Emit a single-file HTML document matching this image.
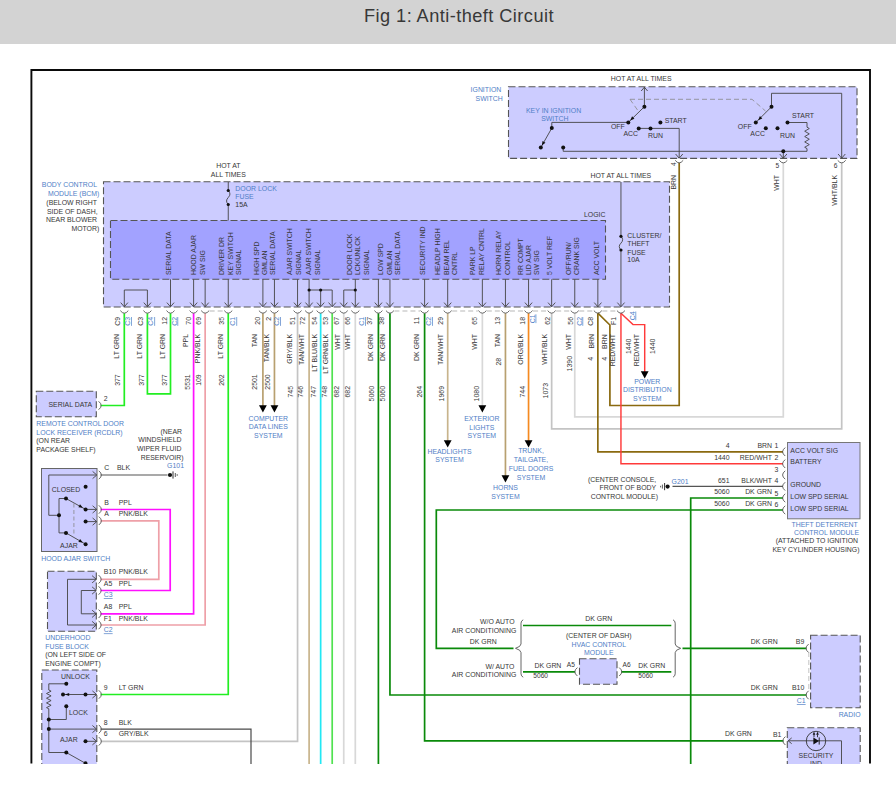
<!DOCTYPE html>
<html lang="en">
<head>
<meta charset="utf-8">
<title>Fig 1: Anti-theft Circuit</title>
<style>
html,body{margin:0;padding:0;background:#fff;}
body{width:896px;height:793px;overflow:hidden;position:relative;font-family:"Liberation Sans",sans-serif;}
#hdr{position:absolute;left:0;top:0;width:896px;height:43.5px;background:#d3d3d3;}
#ttl{position:absolute;left:364px;top:3.5px;margin:0;font-weight:normal;font-size:18.2px;line-height:24px;color:#383838;white-space:nowrap;letter-spacing:0.44px;}
#dia{position:absolute;left:0;top:0;width:896px;height:763.5px;overflow:hidden;}
svg text{font-family:"Liberation Sans",sans-serif;}
</style>
</head>
<body>
<div id="hdr"><h1 id="ttl">Fig 1: Anti-theft Circuit</h1></div>
<div id="dia">
<svg width="896" height="793" viewBox="0 0 896 793">
<rect x="508.5" y="86.8" width="348.50" height="71.60" fill="#ccccff" stroke="#555" stroke-width="1.1" stroke-dasharray="7 3"/>
<rect x="103.5" y="181.8" width="566.00" height="125.20" fill="#ccccff" stroke="#555" stroke-width="1.1" stroke-dasharray="7 3"/>
<rect x="110.5" y="220.5" width="495.00" height="58.80" fill="#a2a2ff" stroke="#555" stroke-width="1.1" stroke-dasharray="7 3"/>
<rect x="36.3" y="391.3" width="60.00" height="25.50" fill="#ccccff" stroke="#555" stroke-width="1.1" stroke-dasharray="7 3"/>
<rect x="41.5" y="468.5" width="55.50" height="83.00" fill="#ccccff" stroke="#666" stroke-width="1"/>
<rect x="47.5" y="571.3" width="48.80" height="60.00" fill="#ccccff" stroke="#555" stroke-width="1.1" stroke-dasharray="7 3"/>
<rect x="41.8" y="670" width="55.00" height="105.00" fill="#ccccff" stroke="#555" stroke-width="1.1" stroke-dasharray="7 3"/>
<rect x="787.5" y="442.5" width="72.50" height="76.30" fill="#ccccff" stroke="#777" stroke-width="1"/>
<rect x="579.5" y="658.8" width="37.50" height="25.50" fill="#ccccff" stroke="#555" stroke-width="1.1" stroke-dasharray="7 3"/>
<rect x="810.6" y="635.2" width="49.60" height="72.60" fill="#ccccff" stroke="#555" stroke-width="1.1" stroke-dasharray="7 3"/>
<rect x="787.3" y="727.8" width="72.90" height="47.20" fill="#ccccff" stroke="#555" stroke-width="1.1" stroke-dasharray="7 3"/>
<polyline points="124.30,313.20 124.30,405.50 100.50,405.50" fill="none" stroke="#22ee22" stroke-width="1.7" stroke-linejoin="miter" stroke-linecap="butt"/>
<polyline points="147.40,313.20 147.40,393.80 170.50,393.80 170.50,313.20" fill="none" stroke="#22ee22" stroke-width="1.7" stroke-linejoin="miter" stroke-linecap="butt"/>
<polyline points="193.60,313.20 193.60,613.80 100.50,613.80" fill="none" stroke="#ff10ff" stroke-width="1.7" stroke-linejoin="miter" stroke-linecap="butt"/>
<polyline points="205.15,313.20 205.15,625.00 100.50,625.00" fill="none" stroke="#eea0a8" stroke-width="1.7" stroke-linejoin="miter" stroke-linecap="butt"/>
<polyline points="228.25,313.20 228.25,694.50 100.50,694.50" fill="none" stroke="#22ee22" stroke-width="1.7" stroke-linejoin="miter" stroke-linecap="butt"/>
<polyline points="262.90,313.20 262.90,406.00" fill="none" stroke="#b8a070" stroke-width="1.7" stroke-linejoin="miter" stroke-linecap="butt"/>
<polyline points="274.45,313.20 274.45,406.00" fill="none" stroke="#b8a070" stroke-width="1.7" stroke-linejoin="miter" stroke-linecap="butt"/>
<polygon points="259.00,405.30 266.80,405.30 262.90,412.60" fill="#000"/>
<polygon points="270.55,405.30 278.35,405.30 274.45,412.60" fill="#000"/>
<polyline points="297.55,313.20 297.55,741.30 100.50,741.30" fill="none" stroke="#c4c4c4" stroke-width="1.7" stroke-linejoin="miter" stroke-linecap="butt"/>
<polyline points="309.10,313.20 309.10,770.00" fill="none" stroke="#c8b48c" stroke-width="1.7" stroke-linejoin="miter" stroke-linecap="butt"/>
<polyline points="320.65,313.20 320.65,770.00" fill="none" stroke="#22e8f4" stroke-width="1.7" stroke-linejoin="miter" stroke-linecap="butt"/>
<polyline points="332.20,313.20 332.20,770.00" fill="none" stroke="#50e250" stroke-width="1.7" stroke-linejoin="miter" stroke-linecap="butt"/>
<polyline points="343.75,313.20 343.75,770.00" fill="none" stroke="#d8d8d8" stroke-width="1.7" stroke-linejoin="miter" stroke-linecap="butt"/>
<polyline points="355.30,313.20 355.30,770.00" fill="none" stroke="#d8d8d8" stroke-width="1.7" stroke-linejoin="miter" stroke-linecap="butt"/>
<polyline points="378.40,313.20 378.40,770.00" fill="none" stroke="#0a8a0a" stroke-width="1.7" stroke-linejoin="miter" stroke-linecap="butt"/>
<polyline points="389.95,313.20 389.95,695.00 806.50,695.00" fill="none" stroke="#0a8a0a" stroke-width="1.7" stroke-linejoin="miter" stroke-linecap="butt"/>
<polyline points="424.60,313.20 424.60,740.80 783.50,740.80" fill="none" stroke="#0a8a0a" stroke-width="1.7" stroke-linejoin="miter" stroke-linecap="butt"/>
<polyline points="447.70,313.20 447.70,441.00" fill="none" stroke="#c8b48c" stroke-width="1.7" stroke-linejoin="miter" stroke-linecap="butt"/>
<polygon points="443.80,440.30 451.60,440.30 447.70,447.60" fill="#000"/>
<polyline points="482.35,313.20 482.35,406.00" fill="none" stroke="#d8d8d8" stroke-width="1.7" stroke-linejoin="miter" stroke-linecap="butt"/>
<polygon points="478.45,405.30 486.25,405.30 482.35,412.60" fill="#000"/>
<polyline points="505.45,313.20 505.45,476.00" fill="none" stroke="#b8a070" stroke-width="1.7" stroke-linejoin="miter" stroke-linecap="butt"/>
<polygon points="501.55,475.30 509.35,475.30 505.45,482.60" fill="#000"/>
<polyline points="528.55,313.20 528.55,441.00" fill="none" stroke="#f58a20" stroke-width="1.7" stroke-linejoin="miter" stroke-linecap="butt"/>
<polygon points="524.65,440.30 532.45,440.30 528.55,447.60" fill="#000"/>
<polyline points="551.65,313.20 551.65,428.80 841.70,428.80 841.70,162.80" fill="none" stroke="#c4c4c4" stroke-width="1.7" stroke-linejoin="miter" stroke-linecap="butt"/>
<polyline points="574.75,313.20 574.75,416.80 783.30,416.80 783.30,162.80" fill="none" stroke="#d8d8d8" stroke-width="1.7" stroke-linejoin="miter" stroke-linecap="butt"/>
<polyline points="597.85,313.20 597.85,451.80 783.00,451.80" fill="none" stroke="#8a6a10" stroke-width="1.7" stroke-linejoin="miter" stroke-linecap="butt"/>
<polyline points="597.85,313.20 609.90,325.00 609.90,405.50 679.20,405.50 679.20,162.80" fill="none" stroke="#8a6a10" stroke-width="1.7" stroke-linejoin="miter" stroke-linecap="butt"/>
<polyline points="620.95,313.20 620.95,463.80 783.00,463.80" fill="none" stroke="#ff3a3a" stroke-width="1.4449999999999998" stroke-linejoin="miter" stroke-linecap="butt"/>
<polyline points="620.95,313.20 633.00,324.60 644.70,324.60 644.70,372.00" fill="none" stroke="#ff3a3a" stroke-width="1.4449999999999998" stroke-linejoin="miter" stroke-linecap="butt"/>
<polygon points="640.80,371.30 648.60,371.30 644.70,378.60" fill="#000"/>
<polyline points="672.50,486.40 783.00,486.40" fill="none" stroke="#555555" stroke-width="1.1" stroke-linejoin="miter" stroke-linecap="butt"/>
<polyline points="783.00,510.00 436.30,510.00 436.30,648.30 513.50,648.30" fill="none" stroke="#0a8a0a" stroke-width="1.7" stroke-linejoin="miter" stroke-linecap="butt"/>
<polyline points="783.00,498.00 690.70,498.00 690.70,770.00" fill="none" stroke="#0a8a0a" stroke-width="1.7" stroke-linejoin="miter" stroke-linecap="butt"/>
<polyline points="523.00,625.50 671.30,625.50" fill="none" stroke="#0a8a0a" stroke-width="1.7" stroke-linejoin="miter" stroke-linecap="butt"/>
<polyline points="523.00,671.80 575.20,671.80" fill="none" stroke="#0a8a0a" stroke-width="1.7" stroke-linejoin="miter" stroke-linecap="butt"/>
<polyline points="621.30,671.80 671.30,671.80" fill="none" stroke="#0a8a0a" stroke-width="1.7" stroke-linejoin="miter" stroke-linecap="butt"/>
<polyline points="682.50,648.30 806.50,648.30" fill="none" stroke="#0a8a0a" stroke-width="1.7" stroke-linejoin="miter" stroke-linecap="butt"/>
<polyline points="100.50,475.00 167.50,475.00" fill="none" stroke="#555" stroke-width="1.2" stroke-linejoin="miter" stroke-linecap="butt"/>
<polyline points="100.50,509.50 170.20,509.50 170.20,590.50 100.50,590.50" fill="none" stroke="#ff10ff" stroke-width="1.7" stroke-linejoin="miter" stroke-linecap="butt"/>
<polyline points="100.50,520.80 158.80,520.80 158.80,579.30 100.50,579.30" fill="none" stroke="#eea0a8" stroke-width="1.7" stroke-linejoin="miter" stroke-linecap="butt"/>
<polyline points="100.50,729.10 251.00,729.10 251.00,770.00" fill="none" stroke="#4a4a4a" stroke-width="1.2" stroke-linejoin="miter" stroke-linecap="butt"/>
<polyline points="644.40,106.70 644.40,87.20" fill="none" stroke="#444" stroke-width="0.9" stroke-linejoin="miter" stroke-linecap="butt"/>
<polyline points="641.20,91.00 644.40,87.20 647.60,91.00" fill="none" stroke="#444" stroke-width="0.9" stroke-linejoin="miter" stroke-linecap="butt"/>
<polyline points="630.00,99.30 752.00,99.30 765.50,111.00" fill="none" stroke="#888" stroke-width="0.8" stroke-linejoin="miter" stroke-linecap="butt" stroke-dasharray="5 3"/>
<polyline points="630.00,99.30 638.20,111.00" fill="none" stroke="#888" stroke-width="0.8" stroke-linejoin="miter" stroke-linecap="butt" stroke-dasharray="5 3"/>
<polyline points="644.40,106.70 628.30,122.40" fill="none" stroke="#444" stroke-width="0.9" stroke-linejoin="miter" stroke-linecap="butt"/>
<polygon points="630.23,120.52 632.05,116.37 634.43,118.80" fill="#111"/>
<polyline points="628.30,122.40 551.80,122.40 551.80,128.10" fill="none" stroke="#444" stroke-width="0.9" stroke-linejoin="miter" stroke-linecap="butt"/>
<polyline points="551.80,128.10 540.80,147.50" fill="none" stroke="#444" stroke-width="0.9" stroke-linejoin="miter" stroke-linecap="butt"/>
<polygon points="541.90,145.56 542.49,141.07 545.45,142.74" fill="#111"/>
<polyline points="563.20,147.50 563.20,151.30 807.00,151.30 807.00,148.60" fill="none" stroke="#444" stroke-width="0.9" stroke-linejoin="miter" stroke-linecap="butt"/>
<polyline points="638.70,128.40 679.20,128.40 679.20,158.00" fill="none" stroke="#444" stroke-width="0.9" stroke-linejoin="miter" stroke-linecap="butt"/>
<polyline points="675.60,154.00 679.20,158.20 682.80,154.00" fill="none" stroke="#444" stroke-width="0.9" stroke-linejoin="miter" stroke-linecap="butt"/>
<circle cx="644.40" cy="106.70" r="2.0" fill="#111"/>
<circle cx="628.30" cy="122.40" r="2.0" fill="#111"/>
<circle cx="551.80" cy="128.10" r="2.0" fill="#111"/>
<circle cx="540.80" cy="147.50" r="2.0" fill="#111"/>
<circle cx="563.20" cy="147.50" r="2.0" fill="#111"/>
<circle cx="638.70" cy="128.40" r="2.0" fill="#111"/>
<circle cx="650.50" cy="128.40" r="2.0" fill="#111"/>
<circle cx="660.40" cy="122.40" r="2.0" fill="#111"/>
<polyline points="771.50,106.80 771.50,93.30 841.70,93.30 841.70,158.00" fill="none" stroke="#444" stroke-width="0.9" stroke-linejoin="miter" stroke-linecap="butt"/>
<polyline points="838.10,154.00 841.70,158.20 845.30,154.00" fill="none" stroke="#444" stroke-width="0.9" stroke-linejoin="miter" stroke-linecap="butt"/>
<polyline points="771.50,106.80 755.80,122.50" fill="none" stroke="#444" stroke-width="0.9" stroke-linejoin="miter" stroke-linecap="butt"/>
<polygon points="758.15,120.14 759.92,115.97 762.33,118.38" fill="#111"/>
<polyline points="787.50,122.50 807.00,122.50 807.00,127.20" fill="none" stroke="#444" stroke-width="0.9" stroke-linejoin="miter" stroke-linecap="butt"/>
<polyline points="807.00,127.20 809.30,128.54 804.70,131.21 809.30,133.89 804.70,136.56 809.30,139.24 804.70,141.91 809.30,144.59 804.70,147.26 807.00,148.60" fill="none" stroke="#444" stroke-width="0.9" stroke-linejoin="miter" stroke-linecap="butt"/>
<polyline points="783.30,151.30 783.30,158.00" fill="none" stroke="#444" stroke-width="0.9" stroke-linejoin="miter" stroke-linecap="butt"/>
<polyline points="779.70,154.00 783.30,158.20 786.90,154.00" fill="none" stroke="#444" stroke-width="0.9" stroke-linejoin="miter" stroke-linecap="butt"/>
<circle cx="771.50" cy="106.80" r="2.0" fill="#111"/>
<circle cx="755.80" cy="122.50" r="2.0" fill="#111"/>
<circle cx="765.80" cy="128.30" r="2.0" fill="#111"/>
<circle cx="777.50" cy="128.30" r="2.0" fill="#111"/>
<circle cx="787.50" cy="122.50" r="2.0" fill="#111"/>
<circle cx="783.30" cy="151.30" r="2.0" fill="#111"/>
<path d="M675.20,160.30 Q679.20,165.50 683.20,160.30" fill="none" stroke="#555" stroke-width="0.9"/>
<path d="M779.30,160.30 Q783.30,165.50 787.30,160.30" fill="none" stroke="#555" stroke-width="0.9"/>
<path d="M837.70,160.30 Q841.70,165.50 845.70,160.30" fill="none" stroke="#555" stroke-width="0.9"/>
<polyline points="228.25,182.00 228.25,190.50" fill="none" stroke="#444" stroke-width="0.9" stroke-linejoin="miter" stroke-linecap="butt"/>
<polyline points="228.25,204.50 228.25,220.50" fill="none" stroke="#444" stroke-width="0.9" stroke-linejoin="miter" stroke-linecap="butt"/>
<path d="M228.25,190.5 q3.4,3.5 0,7 q-3.4,3.5 0,7" fill="none" stroke="#444" stroke-width="0.9"/>
<circle cx="228.25" cy="190.50" r="1.6" fill="#111"/>
<circle cx="228.25" cy="204.50" r="1.6" fill="#111"/>
<polyline points="620.95,182.00 620.95,236.30" fill="none" stroke="#444" stroke-width="0.9" stroke-linejoin="miter" stroke-linecap="butt"/>
<polyline points="620.95,250.00 620.95,306.50" fill="none" stroke="#444" stroke-width="0.9" stroke-linejoin="miter" stroke-linecap="butt"/>
<path d="M620.95,236.3 q3.4,3.4 0,6.85 q-3.4,3.4 0,6.85" fill="none" stroke="#444" stroke-width="0.9"/>
<circle cx="620.95" cy="236.30" r="1.6" fill="#111"/>
<circle cx="620.95" cy="250.00" r="1.6" fill="#111"/>
<polyline points="617.35,302.60 620.95,306.80 624.55,302.60" fill="none" stroke="#444" stroke-width="0.9" stroke-linejoin="miter" stroke-linecap="butt"/>
<path d="M120.30,310.60 Q124.30,315.80 128.30,310.60" fill="none" stroke="#555" stroke-width="0.9"/>
<path d="M143.40,310.60 Q147.40,315.80 151.40,310.60" fill="none" stroke="#555" stroke-width="0.9"/>
<path d="M166.50,310.60 Q170.50,315.80 174.50,310.60" fill="none" stroke="#555" stroke-width="0.9"/>
<path d="M189.60,310.60 Q193.60,315.80 197.60,310.60" fill="none" stroke="#555" stroke-width="0.9"/>
<path d="M201.15,310.60 Q205.15,315.80 209.15,310.60" fill="none" stroke="#555" stroke-width="0.9"/>
<path d="M224.25,310.60 Q228.25,315.80 232.25,310.60" fill="none" stroke="#555" stroke-width="0.9"/>
<path d="M258.90,310.60 Q262.90,315.80 266.90,310.60" fill="none" stroke="#555" stroke-width="0.9"/>
<path d="M270.45,310.60 Q274.45,315.80 278.45,310.60" fill="none" stroke="#555" stroke-width="0.9"/>
<path d="M293.55,310.60 Q297.55,315.80 301.55,310.60" fill="none" stroke="#555" stroke-width="0.9"/>
<path d="M305.10,310.60 Q309.10,315.80 313.10,310.60" fill="none" stroke="#555" stroke-width="0.9"/>
<path d="M316.65,310.60 Q320.65,315.80 324.65,310.60" fill="none" stroke="#555" stroke-width="0.9"/>
<path d="M328.20,310.60 Q332.20,315.80 336.20,310.60" fill="none" stroke="#555" stroke-width="0.9"/>
<path d="M339.75,310.60 Q343.75,315.80 347.75,310.60" fill="none" stroke="#555" stroke-width="0.9"/>
<path d="M351.30,310.60 Q355.30,315.80 359.30,310.60" fill="none" stroke="#555" stroke-width="0.9"/>
<path d="M374.40,310.60 Q378.40,315.80 382.40,310.60" fill="none" stroke="#555" stroke-width="0.9"/>
<path d="M385.95,310.60 Q389.95,315.80 393.95,310.60" fill="none" stroke="#555" stroke-width="0.9"/>
<path d="M420.60,310.60 Q424.60,315.80 428.60,310.60" fill="none" stroke="#555" stroke-width="0.9"/>
<path d="M443.70,310.60 Q447.70,315.80 451.70,310.60" fill="none" stroke="#555" stroke-width="0.9"/>
<path d="M478.35,310.60 Q482.35,315.80 486.35,310.60" fill="none" stroke="#555" stroke-width="0.9"/>
<path d="M501.45,310.60 Q505.45,315.80 509.45,310.60" fill="none" stroke="#555" stroke-width="0.9"/>
<path d="M524.55,310.60 Q528.55,315.80 532.55,310.60" fill="none" stroke="#555" stroke-width="0.9"/>
<path d="M547.65,310.60 Q551.65,315.80 555.65,310.60" fill="none" stroke="#555" stroke-width="0.9"/>
<path d="M570.75,310.60 Q574.75,315.80 578.75,310.60" fill="none" stroke="#555" stroke-width="0.9"/>
<path d="M593.85,310.60 Q597.85,315.80 601.85,310.60" fill="none" stroke="#555" stroke-width="0.9"/>
<path d="M616.95,310.60 Q620.95,315.80 624.95,310.60" fill="none" stroke="#555" stroke-width="0.9"/>
<polyline points="170.50,279.30 170.50,306.50" fill="none" stroke="#444" stroke-width="0.9" stroke-linejoin="miter" stroke-linecap="butt"/>
<polyline points="166.90,302.60 170.50,306.80 174.10,302.60" fill="none" stroke="#444" stroke-width="0.9" stroke-linejoin="miter" stroke-linecap="butt"/>
<polyline points="193.60,279.30 193.60,306.50" fill="none" stroke="#444" stroke-width="0.9" stroke-linejoin="miter" stroke-linecap="butt"/>
<polyline points="190.00,302.60 193.60,306.80 197.20,302.60" fill="none" stroke="#444" stroke-width="0.9" stroke-linejoin="miter" stroke-linecap="butt"/>
<polyline points="205.15,279.30 205.15,306.50" fill="none" stroke="#444" stroke-width="0.9" stroke-linejoin="miter" stroke-linecap="butt"/>
<polyline points="201.55,302.60 205.15,306.80 208.75,302.60" fill="none" stroke="#444" stroke-width="0.9" stroke-linejoin="miter" stroke-linecap="butt"/>
<polyline points="228.25,279.30 228.25,306.50" fill="none" stroke="#444" stroke-width="0.9" stroke-linejoin="miter" stroke-linecap="butt"/>
<polyline points="224.65,302.60 228.25,306.80 231.85,302.60" fill="none" stroke="#444" stroke-width="0.9" stroke-linejoin="miter" stroke-linecap="butt"/>
<polyline points="262.90,279.30 262.90,306.50" fill="none" stroke="#444" stroke-width="0.9" stroke-linejoin="miter" stroke-linecap="butt"/>
<polyline points="259.30,302.60 262.90,306.80 266.50,302.60" fill="none" stroke="#444" stroke-width="0.9" stroke-linejoin="miter" stroke-linecap="butt"/>
<polyline points="274.45,279.30 274.45,306.50" fill="none" stroke="#444" stroke-width="0.9" stroke-linejoin="miter" stroke-linecap="butt"/>
<polyline points="270.85,302.60 274.45,306.80 278.05,302.60" fill="none" stroke="#444" stroke-width="0.9" stroke-linejoin="miter" stroke-linecap="butt"/>
<polyline points="297.55,279.30 297.55,306.50" fill="none" stroke="#444" stroke-width="0.9" stroke-linejoin="miter" stroke-linecap="butt"/>
<polyline points="293.95,302.60 297.55,306.80 301.15,302.60" fill="none" stroke="#444" stroke-width="0.9" stroke-linejoin="miter" stroke-linecap="butt"/>
<polyline points="309.10,279.30 309.10,306.50" fill="none" stroke="#444" stroke-width="0.9" stroke-linejoin="miter" stroke-linecap="butt"/>
<polyline points="305.50,302.60 309.10,306.80 312.70,302.60" fill="none" stroke="#444" stroke-width="0.9" stroke-linejoin="miter" stroke-linecap="butt"/>
<polyline points="355.30,279.30 355.30,306.50" fill="none" stroke="#444" stroke-width="0.9" stroke-linejoin="miter" stroke-linecap="butt"/>
<polyline points="351.70,302.60 355.30,306.80 358.90,302.60" fill="none" stroke="#444" stroke-width="0.9" stroke-linejoin="miter" stroke-linecap="butt"/>
<polyline points="378.40,279.30 378.40,306.50" fill="none" stroke="#444" stroke-width="0.9" stroke-linejoin="miter" stroke-linecap="butt"/>
<polyline points="374.80,302.60 378.40,306.80 382.00,302.60" fill="none" stroke="#444" stroke-width="0.9" stroke-linejoin="miter" stroke-linecap="butt"/>
<polyline points="389.95,279.30 389.95,306.50" fill="none" stroke="#444" stroke-width="0.9" stroke-linejoin="miter" stroke-linecap="butt"/>
<polyline points="386.35,302.60 389.95,306.80 393.55,302.60" fill="none" stroke="#444" stroke-width="0.9" stroke-linejoin="miter" stroke-linecap="butt"/>
<polyline points="424.60,279.30 424.60,306.50" fill="none" stroke="#444" stroke-width="0.9" stroke-linejoin="miter" stroke-linecap="butt"/>
<polyline points="421.00,302.60 424.60,306.80 428.20,302.60" fill="none" stroke="#444" stroke-width="0.9" stroke-linejoin="miter" stroke-linecap="butt"/>
<polyline points="447.70,279.30 447.70,306.50" fill="none" stroke="#444" stroke-width="0.9" stroke-linejoin="miter" stroke-linecap="butt"/>
<polyline points="444.10,302.60 447.70,306.80 451.30,302.60" fill="none" stroke="#444" stroke-width="0.9" stroke-linejoin="miter" stroke-linecap="butt"/>
<polyline points="482.35,279.30 482.35,306.50" fill="none" stroke="#444" stroke-width="0.9" stroke-linejoin="miter" stroke-linecap="butt"/>
<polyline points="478.75,302.60 482.35,306.80 485.95,302.60" fill="none" stroke="#444" stroke-width="0.9" stroke-linejoin="miter" stroke-linecap="butt"/>
<polyline points="505.45,279.30 505.45,306.50" fill="none" stroke="#444" stroke-width="0.9" stroke-linejoin="miter" stroke-linecap="butt"/>
<polyline points="501.85,302.60 505.45,306.80 509.05,302.60" fill="none" stroke="#444" stroke-width="0.9" stroke-linejoin="miter" stroke-linecap="butt"/>
<polyline points="528.55,279.30 528.55,306.50" fill="none" stroke="#444" stroke-width="0.9" stroke-linejoin="miter" stroke-linecap="butt"/>
<polyline points="524.95,302.60 528.55,306.80 532.15,302.60" fill="none" stroke="#444" stroke-width="0.9" stroke-linejoin="miter" stroke-linecap="butt"/>
<polyline points="551.65,279.30 551.65,306.50" fill="none" stroke="#444" stroke-width="0.9" stroke-linejoin="miter" stroke-linecap="butt"/>
<polyline points="548.05,302.60 551.65,306.80 555.25,302.60" fill="none" stroke="#444" stroke-width="0.9" stroke-linejoin="miter" stroke-linecap="butt"/>
<polyline points="574.75,279.30 574.75,306.50" fill="none" stroke="#444" stroke-width="0.9" stroke-linejoin="miter" stroke-linecap="butt"/>
<polyline points="571.15,302.60 574.75,306.80 578.35,302.60" fill="none" stroke="#444" stroke-width="0.9" stroke-linejoin="miter" stroke-linecap="butt"/>
<polyline points="597.85,279.30 597.85,306.50" fill="none" stroke="#444" stroke-width="0.9" stroke-linejoin="miter" stroke-linecap="butt"/>
<polyline points="594.25,302.60 597.85,306.80 601.45,302.60" fill="none" stroke="#444" stroke-width="0.9" stroke-linejoin="miter" stroke-linecap="butt"/>
<polyline points="124.30,306.50 124.30,290.00 147.40,290.00 147.40,306.50" fill="none" stroke="#444" stroke-width="0.9" stroke-linejoin="miter" stroke-linecap="butt"/>
<polyline points="120.70,302.60 124.30,306.80 127.90,302.60" fill="none" stroke="#444" stroke-width="0.9" stroke-linejoin="miter" stroke-linecap="butt"/>
<polyline points="143.80,302.60 147.40,306.80 151.00,302.60" fill="none" stroke="#444" stroke-width="0.9" stroke-linejoin="miter" stroke-linecap="butt"/>
<polyline points="309.10,290.00 332.20,290.00 332.20,306.50" fill="none" stroke="#444" stroke-width="0.9" stroke-linejoin="miter" stroke-linecap="butt"/>
<polyline points="320.65,290.00 320.65,306.50" fill="none" stroke="#444" stroke-width="0.9" stroke-linejoin="miter" stroke-linecap="butt"/>
<polyline points="317.05,302.60 320.65,306.80 324.25,302.60" fill="none" stroke="#444" stroke-width="0.9" stroke-linejoin="miter" stroke-linecap="butt"/>
<polyline points="328.60,302.60 332.20,306.80 335.80,302.60" fill="none" stroke="#444" stroke-width="0.9" stroke-linejoin="miter" stroke-linecap="butt"/>
<circle cx="309.10" cy="290.00" r="1.6" fill="#111"/>
<circle cx="320.65" cy="290.00" r="1.6" fill="#111"/>
<polyline points="355.30,290.00 343.75,290.00 343.75,306.50" fill="none" stroke="#444" stroke-width="0.9" stroke-linejoin="miter" stroke-linecap="butt"/>
<polyline points="340.15,302.60 343.75,306.80 347.35,302.60" fill="none" stroke="#444" stroke-width="0.9" stroke-linejoin="miter" stroke-linecap="butt"/>
<circle cx="355.30" cy="290.00" r="1.6" fill="#111"/>
<polyline points="209.65,311.00 223.75,311.00" fill="none" stroke="#999" stroke-width="0.7" stroke-linejoin="miter" stroke-linecap="butt" stroke-dasharray="5 3"/>
<polyline points="394.45,311.00 420.10,311.00" fill="none" stroke="#999" stroke-width="0.7" stroke-linejoin="miter" stroke-linecap="butt" stroke-dasharray="5 3"/>
<polyline points="452.20,311.00 477.85,311.00" fill="none" stroke="#999" stroke-width="0.7" stroke-linejoin="miter" stroke-linecap="butt" stroke-dasharray="5 3"/>
<polyline points="486.85,311.00 500.95,311.00" fill="none" stroke="#999" stroke-width="0.7" stroke-linejoin="miter" stroke-linecap="butt" stroke-dasharray="5 3"/>
<polyline points="509.95,311.00 524.05,311.00" fill="none" stroke="#999" stroke-width="0.7" stroke-linejoin="miter" stroke-linecap="butt" stroke-dasharray="5 3"/>
<polyline points="533.05,311.00 547.15,311.00" fill="none" stroke="#999" stroke-width="0.7" stroke-linejoin="miter" stroke-linecap="butt" stroke-dasharray="5 3"/>
<polyline points="556.15,311.00 570.25,311.00" fill="none" stroke="#999" stroke-width="0.7" stroke-linejoin="miter" stroke-linecap="butt" stroke-dasharray="5 3"/>
<polyline points="579.25,311.00 593.35,311.00" fill="none" stroke="#999" stroke-width="0.7" stroke-linejoin="miter" stroke-linecap="butt" stroke-dasharray="5 3"/>
<polyline points="602.35,311.00 616.45,311.00" fill="none" stroke="#999" stroke-width="0.7" stroke-linejoin="miter" stroke-linecap="butt" stroke-dasharray="5 3"/>
<text transform="translate(170.90 275.00) rotate(-90)" fill="#363636" font-size="6.92">SERIAL DATA</text>
<text transform="translate(195.80 275.00) rotate(-90)" fill="#363636" font-size="6.92">HOOD AJAR</text>
<text transform="translate(205.10 275.00) rotate(-90)" fill="#363636" font-size="6.92">SW SIG</text>
<text transform="translate(223.90 275.00) rotate(-90)" fill="#363636" font-size="6.92">DRIVER DR</text>
<text transform="translate(233.00 275.00) rotate(-90)" fill="#363636" font-size="6.92">KEY SWITCH</text>
<text transform="translate(240.80 275.00) rotate(-90)" fill="#363636" font-size="6.92">SIGNAL</text>
<text transform="translate(259.00 275.00) rotate(-90)" fill="#363636" font-size="6.92">HIGH SPD</text>
<text transform="translate(266.70 275.00) rotate(-90)" fill="#363636" font-size="6.92">GMLAN</text>
<text transform="translate(274.60 275.00) rotate(-90)" fill="#363636" font-size="6.92">SERIAL DATA</text>
<text transform="translate(292.00 275.00) rotate(-90)" fill="#363636" font-size="6.92">AJAR SWITCH</text>
<text transform="translate(301.00 275.00) rotate(-90)" fill="#363636" font-size="6.92">SIGNAL</text>
<text transform="translate(311.00 275.00) rotate(-90)" fill="#363636" font-size="6.92">AJAR SWITCH</text>
<text transform="translate(320.20 275.00) rotate(-90)" fill="#363636" font-size="6.92">SIGNAL</text>
<text transform="translate(351.50 275.00) rotate(-90)" fill="#363636" font-size="6.92">DOOR LOCK</text>
<text transform="translate(360.20 275.00) rotate(-90)" fill="#363636" font-size="6.92">LCK/UNLCK</text>
<text transform="translate(368.50 275.00) rotate(-90)" fill="#363636" font-size="6.92">SIGNAL</text>
<text transform="translate(383.20 275.00) rotate(-90)" fill="#363636" font-size="6.92">LOW SPD</text>
<text transform="translate(391.50 275.00) rotate(-90)" fill="#363636" font-size="6.92">GMLAN</text>
<text transform="translate(399.80 275.00) rotate(-90)" fill="#363636" font-size="6.92">SERIAL DATA</text>
<text transform="translate(425.20 275.00) rotate(-90)" fill="#363636" font-size="6.92">SECURITY IND</text>
<text transform="translate(440.20 275.00) rotate(-90)" fill="#363636" font-size="6.92">HEADLP HIGH</text>
<text transform="translate(448.50 275.00) rotate(-90)" fill="#363636" font-size="6.92">BEAM REL</text>
<text transform="translate(456.60 275.00) rotate(-90)" fill="#363636" font-size="6.92">CNTRL</text>
<text transform="translate(474.80 275.00) rotate(-90)" fill="#363636" font-size="6.92">PARK LP</text>
<text transform="translate(483.50 275.00) rotate(-90)" fill="#363636" font-size="6.92">RELAY CNTRL</text>
<text transform="translate(501.00 275.00) rotate(-90)" fill="#363636" font-size="6.92">HORN RELAY</text>
<text transform="translate(509.80 275.00) rotate(-90)" fill="#363636" font-size="6.92">CONTROL</text>
<text transform="translate(523.00 275.00) rotate(-90)" fill="#363636" font-size="6.92">RR COMPT</text>
<text transform="translate(531.20 275.00) rotate(-90)" fill="#363636" font-size="6.92">LID AJAR</text>
<text transform="translate(539.30 275.00) rotate(-90)" fill="#363636" font-size="6.92">SW SIG</text>
<text transform="translate(551.80 275.00) rotate(-90)" fill="#363636" font-size="6.92">5 VOLT REF</text>
<text transform="translate(570.50 275.00) rotate(-90)" fill="#363636" font-size="6.92">OFF/RUN/</text>
<text transform="translate(579.30 275.00) rotate(-90)" fill="#363636" font-size="6.92">CRANK SIG</text>
<text transform="translate(598.50 275.00) rotate(-90)" fill="#363636" font-size="6.92">ACC VOLT</text>
<text transform="translate(119.60 317.00) rotate(-90)" text-anchor="end" fill="#363636" font-size="6.92">C9</text>
<text transform="translate(119.20 334.00) rotate(-90)" text-anchor="end" fill="#363636" font-size="6.92">LT GRN</text>
<text transform="translate(120.00 374.30) rotate(-90)" text-anchor="end" fill="#363636" font-size="6.92">377</text>
<text transform="translate(143.40 317.00) rotate(-90)" text-anchor="end" fill="#363636" font-size="6.92">C3</text>
<text transform="translate(142.30 334.00) rotate(-90)" text-anchor="end" fill="#363636" font-size="6.92">LT GRN</text>
<text transform="translate(143.60 374.30) rotate(-90)" text-anchor="end" fill="#363636" font-size="6.92">377</text>
<text transform="translate(166.60 317.00) rotate(-90)" text-anchor="end" fill="#363636" font-size="6.92">12</text>
<text transform="translate(165.20 334.00) rotate(-90)" text-anchor="end" fill="#363636" font-size="6.92">LT GRN</text>
<text transform="translate(166.50 374.30) rotate(-90)" text-anchor="end" fill="#363636" font-size="6.92">377</text>
<text transform="translate(190.50 317.00) rotate(-90)" text-anchor="end" fill="#363636" font-size="6.92">70</text>
<text transform="translate(188.30 334.00) rotate(-90)" text-anchor="end" fill="#363636" font-size="6.92">PPL</text>
<text transform="translate(190.30 374.30) rotate(-90)" text-anchor="end" fill="#363636" font-size="6.92">5531</text>
<text transform="translate(201.15 317.00) rotate(-90)" text-anchor="end" fill="#363636" font-size="6.92">69</text>
<text transform="translate(199.95 334.00) rotate(-90)" text-anchor="end" fill="#363636" font-size="6.92">PNK/BLK</text>
<text transform="translate(201.25 374.30) rotate(-90)" text-anchor="end" fill="#363636" font-size="6.92">109</text>
<text transform="translate(224.25 317.00) rotate(-90)" text-anchor="end" fill="#363636" font-size="6.92">35</text>
<text transform="translate(223.25 334.00) rotate(-90)" text-anchor="end" fill="#363636" font-size="6.92">LT GRN</text>
<text transform="translate(224.25 374.30) rotate(-90)" text-anchor="end" fill="#363636" font-size="6.92">262</text>
<text transform="translate(259.60 317.00) rotate(-90)" text-anchor="end" fill="#363636" font-size="6.92">20</text>
<text transform="translate(256.90 334.00) rotate(-90)" text-anchor="end" fill="#363636" font-size="6.92">TAN</text>
<text transform="translate(257.10 374.30) rotate(-90)" text-anchor="end" fill="#363636" font-size="6.92">2501</text>
<text transform="translate(270.55 317.00) rotate(-90)" text-anchor="end" fill="#363636" font-size="6.92">2</text>
<text transform="translate(268.95 334.00) rotate(-90)" text-anchor="end" fill="#363636" font-size="6.92">TAN/BLK</text>
<text transform="translate(269.95 374.30) rotate(-90)" text-anchor="end" fill="#363636" font-size="6.92">2500</text>
<text transform="translate(294.75 317.00) rotate(-90)" text-anchor="end" fill="#363636" font-size="6.92">51</text>
<text transform="translate(291.95 334.00) rotate(-90)" text-anchor="end" fill="#363636" font-size="6.92">GRY/BLK</text>
<text transform="translate(293.25 386.00) rotate(-90)" text-anchor="end" fill="#363636" font-size="6.92">745</text>
<text transform="translate(305.30 317.00) rotate(-90)" text-anchor="end" fill="#363636" font-size="6.92">72</text>
<text transform="translate(303.60 334.00) rotate(-90)" text-anchor="end" fill="#363636" font-size="6.92">TAN/WHT</text>
<text transform="translate(302.50 386.00) rotate(-90)" text-anchor="end" fill="#363636" font-size="6.92">746</text>
<text transform="translate(317.35 317.00) rotate(-90)" text-anchor="end" fill="#363636" font-size="6.92">54</text>
<text transform="translate(317.35 334.00) rotate(-90)" text-anchor="end" fill="#363636" font-size="6.92">LT BLU/BLK</text>
<text transform="translate(315.75 386.00) rotate(-90)" text-anchor="end" fill="#363636" font-size="6.92">747</text>
<text transform="translate(328.40 317.00) rotate(-90)" text-anchor="end" fill="#363636" font-size="6.92">53</text>
<text transform="translate(327.70 334.00) rotate(-90)" text-anchor="end" fill="#363636" font-size="6.92">LT GRN/BLK</text>
<text transform="translate(327.30 386.00) rotate(-90)" text-anchor="end" fill="#363636" font-size="6.92">748</text>
<text transform="translate(339.45 317.00) rotate(-90)" text-anchor="end" fill="#363636" font-size="6.92">67</text>
<text transform="translate(339.75 334.00) rotate(-90)" text-anchor="end" fill="#363636" font-size="6.92">WHT</text>
<text transform="translate(338.85 386.00) rotate(-90)" text-anchor="end" fill="#363636" font-size="6.92">682</text>
<text transform="translate(349.60 317.00) rotate(-90)" text-anchor="end" fill="#363636" font-size="6.92">66</text>
<text transform="translate(349.50 334.00) rotate(-90)" text-anchor="end" fill="#363636" font-size="6.92">WHT</text>
<text transform="translate(350.40 386.00) rotate(-90)" text-anchor="end" fill="#363636" font-size="6.92">682</text>
<text transform="translate(372.20 317.00) rotate(-90)" text-anchor="end" fill="#363636" font-size="6.92">37</text>
<text transform="translate(373.10 334.00) rotate(-90)" text-anchor="end" fill="#363636" font-size="6.92">DK GRN</text>
<text transform="translate(373.90 386.00) rotate(-90)" text-anchor="end" fill="#363636" font-size="6.92">5060</text>
<text transform="translate(384.05 317.00) rotate(-90)" text-anchor="end" fill="#363636" font-size="6.92">38</text>
<text transform="translate(385.05 334.00) rotate(-90)" text-anchor="end" fill="#363636" font-size="6.92">DK GRN</text>
<text transform="translate(385.05 386.00) rotate(-90)" text-anchor="end" fill="#363636" font-size="6.92">5060</text>
<text transform="translate(419.00 317.00) rotate(-90)" text-anchor="end" fill="#363636" font-size="6.92">11</text>
<text transform="translate(419.30 334.00) rotate(-90)" text-anchor="end" fill="#363636" font-size="6.92">DK GRN</text>
<text transform="translate(421.80 386.00) rotate(-90)" text-anchor="end" fill="#363636" font-size="6.92">264</text>
<text transform="translate(443.40 317.00) rotate(-90)" text-anchor="end" fill="#363636" font-size="6.92">29</text>
<text transform="translate(443.40 334.00) rotate(-90)" text-anchor="end" fill="#363636" font-size="6.92">TAN/WHT</text>
<text transform="translate(444.40 386.00) rotate(-90)" text-anchor="end" fill="#363636" font-size="6.92">1969</text>
<text transform="translate(477.05 317.00) rotate(-90)" text-anchor="end" fill="#363636" font-size="6.92">65</text>
<text transform="translate(477.05 334.00) rotate(-90)" text-anchor="end" fill="#363636" font-size="6.92">WHT</text>
<text transform="translate(479.05 386.00) rotate(-90)" text-anchor="end" fill="#363636" font-size="6.92">1080</text>
<text transform="translate(499.85 317.00) rotate(-90)" text-anchor="end" fill="#363636" font-size="6.92">13</text>
<text transform="translate(499.85 334.00) rotate(-90)" text-anchor="end" fill="#363636" font-size="6.92">TAN</text>
<text transform="translate(501.15 357.80) rotate(-90)" text-anchor="end" fill="#363636" font-size="6.92">28</text>
<text transform="translate(524.85 317.00) rotate(-90)" text-anchor="end" fill="#363636" font-size="6.92">18</text>
<text transform="translate(523.25 334.00) rotate(-90)" text-anchor="end" fill="#363636" font-size="6.92">ORG/BLK</text>
<text transform="translate(524.85 386.00) rotate(-90)" text-anchor="end" fill="#363636" font-size="6.92">744</text>
<text transform="translate(549.65 317.00) rotate(-90)" text-anchor="end" fill="#363636" font-size="6.92">62</text>
<text transform="translate(547.45 334.00) rotate(-90)" text-anchor="end" fill="#363636" font-size="6.92">WHT/BLK</text>
<text transform="translate(548.35 383.00) rotate(-90)" text-anchor="end" fill="#363636" font-size="6.92">1073</text>
<text transform="translate(573.05 317.00) rotate(-90)" text-anchor="end" fill="#363636" font-size="6.92">56</text>
<text transform="translate(571.15 334.00) rotate(-90)" text-anchor="end" fill="#363636" font-size="6.92">WHT</text>
<text transform="translate(571.75 356.00) rotate(-90)" text-anchor="end" fill="#363636" font-size="6.92">1390</text>
<text transform="translate(593.35 317.00) rotate(-90)" text-anchor="end" fill="#363636" font-size="6.92">C8</text>
<text transform="translate(593.55 334.00) rotate(-90)" text-anchor="end" fill="#363636" font-size="6.92">BRN</text>
<text transform="translate(593.35 357.00) rotate(-90)" text-anchor="end" fill="#363636" font-size="6.92">4</text>
<text transform="translate(606.60 334.30) rotate(-90)" text-anchor="end" fill="#363636" font-size="6.92">BRN</text>
<text transform="translate(606.60 357.00) rotate(-90)" text-anchor="end" fill="#363636" font-size="6.92">4</text>
<text transform="translate(616.10 317.00) rotate(-90)" text-anchor="end" fill="#363636" font-size="6.92">F1</text>
<text transform="translate(615.40 334.00) rotate(-90)" text-anchor="end" fill="#363636" font-size="6.92">RED/WHT</text>
<text transform="translate(630.60 338.60) rotate(-90)" text-anchor="end" fill="#363636" font-size="6.92">1440</text>
<text transform="translate(638.70 334.00) rotate(-90)" text-anchor="end" fill="#363636" font-size="6.92">RED/WHT</text>
<text transform="translate(654.50 338.60) rotate(-90)" text-anchor="end" fill="#363636" font-size="6.92">1440</text>
<text transform="translate(130.30 317.00) rotate(-90)" text-anchor="end" fill="#4f7ec6" font-size="6.92" text-decoration="underline">C3</text>
<text transform="translate(153.40 317.00) rotate(-90)" text-anchor="end" fill="#4f7ec6" font-size="6.92" text-decoration="underline">C4</text>
<text transform="translate(176.50 317.00) rotate(-90)" text-anchor="end" fill="#4f7ec6" font-size="6.92" text-decoration="underline">C2</text>
<text transform="translate(235.45 317.00) rotate(-90)" text-anchor="end" fill="#4f7ec6" font-size="6.92" text-decoration="underline">C1</text>
<text transform="translate(279.15 317.00) rotate(-90)" text-anchor="end" fill="#4f7ec6" font-size="6.92" text-decoration="underline">C2</text>
<text transform="translate(364.20 317.00) rotate(-90)" text-anchor="end" fill="#4f7ec6" font-size="6.92" text-decoration="underline">C1</text>
<text transform="translate(431.20 317.00) rotate(-90)" text-anchor="end" fill="#4f7ec6" font-size="6.92" text-decoration="underline">C2</text>
<text transform="translate(534.60 314.30) rotate(-90)" text-anchor="end" fill="#4f7ec6" font-size="6.92" text-decoration="underline">C1</text>
<text transform="translate(581.50 317.00) rotate(-90)" text-anchor="end" fill="#4f7ec6" font-size="6.92" text-decoration="underline">C2</text>
<text transform="translate(634.50 311.50) rotate(-90)" text-anchor="end" fill="#4f7ec6" font-size="6.92" text-decoration="underline">C4</text>
<text x="70.30" y="406.90" text-anchor="middle" fill="#363636" font-size="6.92">SERIAL DATA</text>
<path d="M98.60,401.30 Q103.80,405.50 98.60,409.70" fill="none" stroke="#555" stroke-width="0.9"/>
<text x="103.80" y="401.30" fill="#363636" font-size="6.92">2</text>
<text x="36.30" y="425.50" fill="#4f7ec6" font-size="6.92">REMOTE CONTROL DOOR</text>
<text x="36.30" y="434.50" fill="#4f7ec6" font-size="6.92">LOCK RECEIVER (RCDLR)</text>
<text x="36.30" y="442.80" fill="#363636" font-size="6.92">(ON REAR</text>
<text x="36.30" y="451.80" fill="#363636" font-size="6.92">PACKAGE SHELF)</text>
<text x="182.00" y="433.80" text-anchor="end" fill="#363636" font-size="6.92">(NEAR</text>
<text x="181.50" y="442.40" text-anchor="end" fill="#363636" font-size="6.92">WINDSHIELD</text>
<text x="181.50" y="451.00" text-anchor="end" fill="#363636" font-size="6.92">WIPER FLUID</text>
<text x="183.50" y="459.60" text-anchor="end" fill="#363636" font-size="6.92">RESERVOIR)</text>
<text x="184.00" y="467.60" text-anchor="end" fill="#4f7ec6" font-size="6.92">G101</text>
<circle cx="170.00" cy="475.00" r="2.1" fill="#111"/>
<polyline points="173.00,471.40 173.00,478.60" fill="none" stroke="#333" stroke-width="1.0" stroke-linejoin="miter" stroke-linecap="butt"/>
<polyline points="175.30,473.00 175.30,477.00" fill="none" stroke="#333" stroke-width="0.8" stroke-linejoin="miter" stroke-linecap="butt"/>
<polyline points="177.20,474.20 177.20,475.80" fill="none" stroke="#333" stroke-width="0.8" stroke-linejoin="miter" stroke-linecap="butt"/>
<polyline points="96.50,475.00 48.80,475.00 48.80,515.30 59.00,515.30" fill="none" stroke="#444" stroke-width="0.9" stroke-linejoin="miter" stroke-linecap="butt"/>
<polyline points="92.60,471.40 96.80,475.00 92.60,478.60" fill="none" stroke="#444" stroke-width="0.9" stroke-linejoin="miter" stroke-linecap="butt"/>
<polyline points="66.00,498.50 59.00,498.50 59.00,532.90 66.00,532.90" fill="none" stroke="#444" stroke-width="0.9" stroke-linejoin="miter" stroke-linecap="butt"/>
<polyline points="66.00,498.50 85.60,509.40" fill="none" stroke="#444" stroke-width="0.9" stroke-linejoin="miter" stroke-linecap="butt"/>
<polygon points="82.86,507.87 78.36,507.32 80.01,504.35" fill="#111"/>
<polyline points="66.00,532.90 85.60,544.20" fill="none" stroke="#444" stroke-width="0.9" stroke-linejoin="miter" stroke-linecap="butt"/>
<polygon points="82.86,542.62 78.37,541.99 80.07,539.05" fill="#111"/>
<polyline points="85.60,509.40 96.50,509.40" fill="none" stroke="#444" stroke-width="0.9" stroke-linejoin="miter" stroke-linecap="butt"/>
<polyline points="92.60,505.80 96.80,509.40 92.60,513.00" fill="none" stroke="#444" stroke-width="0.9" stroke-linejoin="miter" stroke-linecap="butt"/>
<polyline points="85.60,521.60 96.50,521.60" fill="none" stroke="#444" stroke-width="0.9" stroke-linejoin="miter" stroke-linecap="butt"/>
<polyline points="92.60,518.00 96.80,521.60 92.60,525.20" fill="none" stroke="#444" stroke-width="0.9" stroke-linejoin="miter" stroke-linecap="butt"/>
<polyline points="73.90,503.50 73.90,535.50" fill="none" stroke="#888" stroke-width="0.8" stroke-linejoin="miter" stroke-linecap="butt" stroke-dasharray="4 2.5"/>
<circle cx="59.00" cy="515.30" r="2.0" fill="#111"/>
<circle cx="66.00" cy="498.50" r="2.0" fill="#111"/>
<circle cx="66.00" cy="532.90" r="2.0" fill="#111"/>
<circle cx="85.60" cy="509.40" r="2.0" fill="#111"/>
<circle cx="85.60" cy="486.80" r="2.0" fill="#111"/>
<circle cx="85.60" cy="521.60" r="2.0" fill="#111"/>
<circle cx="85.60" cy="544.20" r="2.0" fill="#111"/>
<text x="51.80" y="491.50" fill="#363636" font-size="6.92">CLOSED</text>
<text x="60.10" y="547.60" fill="#363636" font-size="6.92">AJAR</text>
<text x="41.20" y="560.80" fill="#4f7ec6" font-size="6.92">HOOD AJAR SWITCH</text>
<path d="M98.80,470.80 Q104.00,475.00 98.80,479.20" fill="none" stroke="#555" stroke-width="0.9"/>
<path d="M98.80,505.30 Q104.00,509.50 98.80,513.70" fill="none" stroke="#555" stroke-width="0.9"/>
<path d="M98.80,516.60 Q104.00,520.80 98.80,525.00" fill="none" stroke="#555" stroke-width="0.9"/>
<text x="104.20" y="469.70" fill="#363636" font-size="6.92">C</text>
<text x="117.00" y="469.70" fill="#363636" font-size="6.92">BLK</text>
<text x="104.20" y="504.70" fill="#363636" font-size="6.92">B</text>
<text x="118.70" y="504.70" fill="#363636" font-size="6.92">PPL</text>
<text x="104.20" y="516.10" fill="#363636" font-size="6.92">A</text>
<text x="118.70" y="516.10" fill="#363636" font-size="6.92">PNK/BLK</text>
<polyline points="96.00,579.30 67.50,579.30 67.50,625.00 96.00,625.00" fill="none" stroke="#444" stroke-width="0.9" stroke-linejoin="miter" stroke-linecap="butt"/>
<polyline points="92.10,575.70 96.30,579.30 92.10,582.90" fill="none" stroke="#444" stroke-width="0.9" stroke-linejoin="miter" stroke-linecap="butt"/>
<polyline points="92.10,621.40 96.30,625.00 92.10,628.60" fill="none" stroke="#444" stroke-width="0.9" stroke-linejoin="miter" stroke-linecap="butt"/>
<polyline points="96.00,590.50 81.30,590.50 81.30,613.80 96.00,613.80" fill="none" stroke="#444" stroke-width="0.9" stroke-linejoin="miter" stroke-linecap="butt"/>
<polyline points="92.10,586.90 96.30,590.50 92.10,594.10" fill="none" stroke="#444" stroke-width="0.9" stroke-linejoin="miter" stroke-linecap="butt"/>
<polyline points="92.10,610.20 96.30,613.80 92.10,617.40" fill="none" stroke="#444" stroke-width="0.9" stroke-linejoin="miter" stroke-linecap="butt"/>
<path d="M98.60,575.10 Q103.80,579.30 98.60,583.50" fill="none" stroke="#555" stroke-width="0.9"/>
<path d="M98.60,586.30 Q103.80,590.50 98.60,594.70" fill="none" stroke="#555" stroke-width="0.9"/>
<path d="M98.60,609.60 Q103.80,613.80 98.60,618.00" fill="none" stroke="#555" stroke-width="0.9"/>
<path d="M98.60,620.80 Q103.80,625.00 98.60,629.20" fill="none" stroke="#555" stroke-width="0.9"/>
<text x="103.80" y="573.80" fill="#363636" font-size="6.92">B10</text>
<text x="118.70" y="573.80" fill="#363636" font-size="6.92">PNK/BLK</text>
<text x="103.80" y="585.80" fill="#363636" font-size="6.92">A5</text>
<text x="118.70" y="585.80" fill="#363636" font-size="6.92">PPL</text>
<text x="103.80" y="597.20" fill="#4f7ec6" font-size="6.92" text-decoration="underline">C3</text>
<text x="103.80" y="608.90" fill="#363636" font-size="6.92">A8</text>
<text x="118.70" y="608.90" fill="#363636" font-size="6.92">PPL</text>
<text x="103.80" y="620.60" fill="#363636" font-size="6.92">F1</text>
<text x="118.70" y="620.60" fill="#363636" font-size="6.92">PNK/BLK</text>
<text x="103.80" y="632.40" fill="#4f7ec6" font-size="6.92" text-decoration="underline">C2</text>
<text x="45.20" y="639.70" fill="#4f7ec6" font-size="6.92">UNDERHOOD</text>
<text x="45.20" y="648.70" fill="#4f7ec6" font-size="6.92">FUSE BLOCK</text>
<text x="45.20" y="657.00" fill="#363636" font-size="6.92">(ON LEFT SIDE OF</text>
<text x="45.20" y="666.00" fill="#363636" font-size="6.92">ENGINE COMPT)</text>
<polyline points="66.30,683.80 48.80,683.80 48.80,690.00" fill="none" stroke="#444" stroke-width="0.9" stroke-linejoin="miter" stroke-linecap="butt"/>
<polyline points="48.80,690.00 51.10,691.17 46.50,693.52 51.10,695.88 46.50,698.23 51.10,700.57 46.50,702.92 51.10,705.27 46.50,707.62 48.80,708.80" fill="none" stroke="#444" stroke-width="0.9" stroke-linejoin="miter" stroke-linecap="butt"/>
<polyline points="48.80,708.80 48.80,752.50 66.30,752.50" fill="none" stroke="#444" stroke-width="0.9" stroke-linejoin="miter" stroke-linecap="butt"/>
<polyline points="63.00,694.50 96.30,694.50" fill="none" stroke="#444" stroke-width="0.9" stroke-linejoin="miter" stroke-linecap="butt"/>
<polyline points="92.40,690.90 96.60,694.50 92.40,698.10" fill="none" stroke="#444" stroke-width="0.9" stroke-linejoin="miter" stroke-linecap="butt"/>
<polygon points="65,694.5 69.2,692.9 69.2,696.1" fill="#111"/>
<polyline points="66.30,706.30 66.30,719.50 48.80,719.50" fill="none" stroke="#444" stroke-width="0.9" stroke-linejoin="miter" stroke-linecap="butt"/>
<polyline points="48.80,729.10 96.30,729.10" fill="none" stroke="#444" stroke-width="0.9" stroke-linejoin="miter" stroke-linecap="butt"/>
<polyline points="92.40,725.50 96.60,729.10 92.40,732.70" fill="none" stroke="#444" stroke-width="0.9" stroke-linejoin="miter" stroke-linecap="butt"/>
<polyline points="85.50,741.30 96.30,741.30" fill="none" stroke="#444" stroke-width="0.9" stroke-linejoin="miter" stroke-linecap="butt"/>
<polyline points="92.40,737.70 96.60,741.30 92.40,744.90" fill="none" stroke="#444" stroke-width="0.9" stroke-linejoin="miter" stroke-linecap="butt"/>
<polyline points="66.30,752.50 85.50,763.30" fill="none" stroke="#444" stroke-width="0.9" stroke-linejoin="miter" stroke-linecap="butt"/>
<circle cx="66.30" cy="683.80" r="2.0" fill="#111"/>
<circle cx="63.00" cy="694.50" r="2.0" fill="#111"/>
<circle cx="85.50" cy="694.50" r="2.0" fill="#111"/>
<circle cx="66.30" cy="706.30" r="2.0" fill="#111"/>
<circle cx="48.80" cy="719.50" r="2.0" fill="#111"/>
<circle cx="48.80" cy="729.10" r="2.0" fill="#111"/>
<circle cx="85.50" cy="741.30" r="2.0" fill="#111"/>
<circle cx="66.30" cy="752.50" r="2.0" fill="#111"/>
<circle cx="85.50" cy="763.30" r="2.0" fill="#111"/>
<path d="M98.80,690.30 Q104.00,694.50 98.80,698.70" fill="none" stroke="#555" stroke-width="0.9"/>
<path d="M98.80,724.90 Q104.00,729.10 98.80,733.30" fill="none" stroke="#555" stroke-width="0.9"/>
<path d="M98.80,737.10 Q104.00,741.30 98.80,745.50" fill="none" stroke="#555" stroke-width="0.9"/>
<text x="61.00" y="678.70" fill="#363636" font-size="6.92">UNLOCK</text>
<text x="69.00" y="714.70" fill="#363636" font-size="6.92">LOCK</text>
<text x="60.00" y="741.70" fill="#363636" font-size="6.92">AJAR</text>
<text x="103.80" y="689.80" fill="#363636" font-size="6.92">9</text>
<text x="118.70" y="689.80" fill="#363636" font-size="6.92">LT GRN</text>
<text x="103.80" y="724.60" fill="#363636" font-size="6.92">8</text>
<text x="118.70" y="724.60" fill="#363636" font-size="6.92">BLK</text>
<text x="103.80" y="735.70" fill="#363636" font-size="6.92">6</text>
<text x="118.70" y="735.70" fill="#363636" font-size="6.92">GRY/BLK</text>
<text x="268.30" y="421.20" text-anchor="middle" fill="#4f7ec6" font-size="6.92">COMPUTER</text>
<text x="268.30" y="428.90" text-anchor="middle" fill="#4f7ec6" font-size="6.92">DATA LINES</text>
<text x="268.30" y="438.20" text-anchor="middle" fill="#4f7ec6" font-size="6.92">SYSTEM</text>
<text x="449.50" y="454.00" text-anchor="middle" fill="#4f7ec6" font-size="6.92">HEADLIGHTS</text>
<text x="449.50" y="461.70" text-anchor="middle" fill="#4f7ec6" font-size="6.92">SYSTEM</text>
<text x="481.80" y="421.20" text-anchor="middle" fill="#4f7ec6" font-size="6.92">EXTERIOR</text>
<text x="481.80" y="430.00" text-anchor="middle" fill="#4f7ec6" font-size="6.92">LIGHTS</text>
<text x="481.80" y="438.20" text-anchor="middle" fill="#4f7ec6" font-size="6.92">SYSTEM</text>
<text x="505.50" y="490.00" text-anchor="middle" fill="#4f7ec6" font-size="6.92">HORNS</text>
<text x="505.50" y="499.00" text-anchor="middle" fill="#4f7ec6" font-size="6.92">SYSTEM</text>
<text x="531.00" y="453.00" text-anchor="middle" fill="#4f7ec6" font-size="6.92">TRUNK,</text>
<text x="531.00" y="461.80" text-anchor="middle" fill="#4f7ec6" font-size="6.92">TAILGATE,</text>
<text x="531.00" y="471.00" text-anchor="middle" fill="#4f7ec6" font-size="6.92">FUEL DOORS</text>
<text x="531.00" y="480.00" text-anchor="middle" fill="#4f7ec6" font-size="6.92">SYSTEM</text>
<text x="647.30" y="383.80" text-anchor="middle" fill="#4f7ec6" font-size="6.92">POWER</text>
<text x="647.30" y="392.00" text-anchor="middle" fill="#4f7ec6" font-size="6.92">DISTRIBUTION</text>
<text x="647.30" y="400.80" text-anchor="middle" fill="#4f7ec6" font-size="6.92">SYSTEM</text>
<text x="656.20" y="481.80" text-anchor="end" fill="#363636" font-size="6.92">(CENTER CONSOLE,</text>
<text x="656.20" y="490.00" text-anchor="end" fill="#363636" font-size="6.92">FRONT OF BODY</text>
<text x="658.00" y="499.00" text-anchor="end" fill="#363636" font-size="6.92">CONTROL MODULE)</text>
<text x="671.60" y="484.00" fill="#4f7ec6" font-size="6.92">G201</text>
<circle cx="667.60" cy="486.60" r="2.1" fill="#111"/>
<polyline points="664.60,483.00 664.60,490.20" fill="none" stroke="#333" stroke-width="1.0" stroke-linejoin="miter" stroke-linecap="butt"/>
<polyline points="662.40,484.60 662.40,488.60" fill="none" stroke="#333" stroke-width="0.8" stroke-linejoin="miter" stroke-linecap="butt"/>
<polyline points="660.60,485.80 660.60,487.40" fill="none" stroke="#333" stroke-width="0.8" stroke-linejoin="miter" stroke-linecap="butt"/>
<path d="M785.20,447.60 Q780.00,451.80 785.20,456.00" fill="none" stroke="#555" stroke-width="0.9"/>
<path d="M785.20,459.60 Q780.00,463.80 785.20,468.00" fill="none" stroke="#555" stroke-width="0.9"/>
<path d="M785.20,470.80 Q780.00,475.00 785.20,479.20" fill="none" stroke="#555" stroke-width="0.9"/>
<path d="M785.20,482.20 Q780.00,486.40 785.20,490.60" fill="none" stroke="#555" stroke-width="0.9"/>
<path d="M785.20,493.80 Q780.00,498.00 785.20,502.20" fill="none" stroke="#555" stroke-width="0.9"/>
<path d="M785.20,505.80 Q780.00,510.00 785.20,514.20" fill="none" stroke="#555" stroke-width="0.9"/>
<text x="729.50" y="447.50" text-anchor="end" fill="#363636" font-size="6.92">4</text>
<text x="772.00" y="447.50" text-anchor="end" fill="#363636" font-size="6.92">BRN</text>
<text x="774.50" y="447.50" fill="#363636" font-size="6.92">1</text>
<text x="729.50" y="459.50" text-anchor="end" fill="#363636" font-size="6.92">1440</text>
<text x="772.00" y="459.50" text-anchor="end" fill="#363636" font-size="6.92">RED/WHT</text>
<text x="774.50" y="459.50" fill="#363636" font-size="6.92">2</text>
<text x="729.50" y="482.60" text-anchor="end" fill="#363636" font-size="6.92">651</text>
<text x="772.00" y="482.60" text-anchor="end" fill="#363636" font-size="6.92">BLK/WHT</text>
<text x="774.50" y="482.60" fill="#363636" font-size="6.92">4</text>
<text x="729.50" y="494.30" text-anchor="end" fill="#363636" font-size="6.92">5060</text>
<text x="772.00" y="494.30" text-anchor="end" fill="#363636" font-size="6.92">DK GRN</text>
<text x="774.50" y="495.70" fill="#363636" font-size="6.92">5</text>
<text x="729.50" y="506.20" text-anchor="end" fill="#363636" font-size="6.92">5060</text>
<text x="772.00" y="506.20" text-anchor="end" fill="#363636" font-size="6.92">DK GRN</text>
<text x="774.50" y="506.70" fill="#363636" font-size="6.92">6</text>
<text x="774.50" y="472.00" fill="#363636" font-size="6.92">3</text>
<text x="790.30" y="453.00" fill="#363636" font-size="6.92">ACC VOLT SIG</text>
<text x="790.30" y="464.30" fill="#363636" font-size="6.92">BATTERY</text>
<text x="790.30" y="487.00" fill="#363636" font-size="6.92">GROUND</text>
<text x="790.30" y="499.00" fill="#363636" font-size="6.92">LOW SPD SERIAL</text>
<text x="790.30" y="511.00" fill="#363636" font-size="6.92">LOW SPD SERIAL</text>
<text x="857.80" y="527.00" text-anchor="end" fill="#4f7ec6" font-size="6.92">THEFT DETERRENT</text>
<text x="859.00" y="535.20" text-anchor="end" fill="#4f7ec6" font-size="6.92">CONTROL MODULE</text>
<text x="858.00" y="542.70" text-anchor="end" fill="#363636" font-size="6.92">(ATTACHED TO IGNITION</text>
<text x="859.50" y="552.30" text-anchor="end" fill="#363636" font-size="6.92">KEY CYLINDER HOUSING)</text>
<path d="M523.2,619.8 q-2.2,1 -2.2,3.4 V644 q0,2.6 -5.5,4.3 q5.5,1.7 5.5,4.3 V673.8 q0,2.4 2.2,3.4" fill="none" stroke="#555" stroke-width="0.9"/>
<path d="M673,619.8 q2.2,1 2.2,3.4 V644 q0,2.6 5.5,4.3 q-5.5,1.7 -5.5,4.3 V673.8 q0,2.4 -2.2,3.4" fill="none" stroke="#555" stroke-width="0.9"/>
<text x="514.50" y="623.80" text-anchor="end" fill="#363636" font-size="6.92">W/O AUTO</text>
<text x="516.30" y="633.00" text-anchor="end" fill="#363636" font-size="6.92">AIR CONDITIONING</text>
<text x="483.30" y="643.80" text-anchor="middle" fill="#363636" font-size="6.92">DK GRN</text>
<text x="514.50" y="668.80" text-anchor="end" fill="#363636" font-size="6.92">W/ AUTO</text>
<text x="516.30" y="676.80" text-anchor="end" fill="#363636" font-size="6.92">AIR CONDITIONING</text>
<text x="534.50" y="668.00" fill="#363636" font-size="6.92">DK GRN</text>
<text x="566.80" y="667.00" fill="#363636" font-size="6.6">A5</text>
<text x="533.30" y="677.50" fill="#363636" font-size="6.6">5060</text>
<text x="598.80" y="620.80" text-anchor="middle" fill="#363636" font-size="6.92">DK GRN</text>
<text x="598.80" y="638.00" text-anchor="middle" fill="#363636" font-size="6.92">(CENTER OF DASH)</text>
<text x="598.80" y="646.80" text-anchor="middle" fill="#4f7ec6" font-size="6.92">HVAC CONTROL</text>
<text x="598.80" y="655.00" text-anchor="middle" fill="#4f7ec6" font-size="6.92">MODULE</text>
<path d="M577.40,667.60 Q572.20,671.80 577.40,676.00" fill="none" stroke="#555" stroke-width="0.9"/>
<path d="M619.20,667.60 Q624.40,671.80 619.20,676.00" fill="none" stroke="#555" stroke-width="0.9"/>
<text x="622.50" y="667.00" fill="#363636" font-size="6.6">A6</text>
<text x="638.30" y="668.00" fill="#363636" font-size="6.92">DK GRN</text>
<text x="638.30" y="677.50" fill="#363636" font-size="6.6">5060</text>
<path d="M808.60,644.10 Q803.40,648.30 808.60,652.50" fill="none" stroke="#555" stroke-width="0.9"/>
<path d="M808.60,690.80 Q803.40,695.00 808.60,699.20" fill="none" stroke="#555" stroke-width="0.9"/>
<polyline points="808.80,652.00 808.80,691.20" fill="none" stroke="#aaa" stroke-width="0.7" stroke-linejoin="miter" stroke-linecap="butt" stroke-dasharray="5 3"/>
<text x="750.80" y="643.80" fill="#363636" font-size="6.92">DK GRN</text>
<text x="795.80" y="643.80" fill="#363636" font-size="6.92">B9</text>
<text x="750.80" y="690.00" fill="#363636" font-size="6.92">DK GRN</text>
<text x="792.00" y="690.00" fill="#363636" font-size="6.92">B10</text>
<text x="796.80" y="703.30" fill="#4f7ec6" font-size="6.92" text-decoration="underline">C1</text>
<text x="860.50" y="716.80" text-anchor="end" fill="#4f7ec6" font-size="6.92">RADIO</text>
<path d="M785.40,736.60 Q780.20,740.80 785.40,745.00" fill="none" stroke="#555" stroke-width="0.9"/>
<text x="725.00" y="735.80" fill="#363636" font-size="6.92">DK GRN</text>
<text x="773.00" y="736.80" fill="#363636" font-size="6.92">B1</text>
<polyline points="788.00,740.80 841.50,740.80 841.50,775.00" fill="none" stroke="#444" stroke-width="0.9" stroke-linejoin="miter" stroke-linecap="butt"/>
<polyline points="791.70,737.90 788.20,740.80 791.70,743.70" fill="none" stroke="#444" stroke-width="0.9" stroke-linejoin="miter" stroke-linecap="butt"/>
<circle cx="816" cy="741" r="9.7" fill="none" stroke="#333" stroke-width="0.9"/>
<polygon points="813.4,737.6 813.4,744.4 819,741" fill="#111"/>
<polyline points="819.20,737.40 819.20,744.60" fill="none" stroke="#111" stroke-width="0.9" stroke-linejoin="miter" stroke-linecap="butt"/>
<polygon points="814,731.8 812.7,734.8 815.3,734.8" fill="#111"/><polygon points="817.5,731.8 816.2,734.8 818.8,734.8" fill="#111"/><path d="M814,734.6v2.6M817.5,734.6v2.6" stroke="#111" stroke-width="0.8"/>
<text x="816.00" y="757.70" text-anchor="middle" fill="#363636" font-size="6.92">SECURITY</text>
<text x="816.00" y="766.00" text-anchor="middle" fill="#363636" font-size="6.92">IND</text>
<text x="501.30" y="91.80" text-anchor="end" fill="#4f7ec6" font-size="6.92">IGNITION</text>
<text x="502.80" y="101.10" text-anchor="end" fill="#4f7ec6" font-size="6.92">SWITCH</text>
<text x="553.60" y="112.60" text-anchor="middle" fill="#4f7ec6" font-size="6.92">KEY IN IGNITION</text>
<text x="554.80" y="120.50" text-anchor="middle" fill="#4f7ec6" font-size="6.92">SWITCH</text>
<text x="641.20" y="80.70" text-anchor="middle" fill="#363636" font-size="6.92">HOT AT ALL TIMES</text>
<text x="611.00" y="128.70" fill="#363636" font-size="6.92">OFF</text>
<text x="623.50" y="135.70" fill="#363636" font-size="6.92">ACC</text>
<text x="648.00" y="137.60" fill="#363636" font-size="6.92">RUN</text>
<text x="664.70" y="122.80" fill="#363636" font-size="6.92">START</text>
<text x="737.80" y="128.80" fill="#363636" font-size="6.92">OFF</text>
<text x="750.30" y="135.80" fill="#363636" font-size="6.92">ACC</text>
<text x="780.00" y="137.50" fill="#363636" font-size="6.92">RUN</text>
<text x="792.00" y="117.50" fill="#363636" font-size="6.92">START</text>
<text transform="translate(676.20 162.30) rotate(-90)" text-anchor="end" fill="#363636" font-size="6.6">4</text>
<text x="775.40" y="168.00" fill="#363636" font-size="6.6">5</text>
<text x="833.80" y="168.00" fill="#363636" font-size="6.6">6</text>
<text transform="translate(675.90 175.00) rotate(-90)" text-anchor="end" fill="#363636" font-size="6.92">BRN</text>
<text transform="translate(779.20 175.00) rotate(-90)" text-anchor="end" fill="#363636" font-size="6.92">WHT</text>
<text transform="translate(837.20 175.00) rotate(-90)" text-anchor="end" fill="#363636" font-size="6.92">WHT/BLK</text>
<text x="97.00" y="186.80" text-anchor="end" fill="#4f7ec6" font-size="6.92">BODY CONTROL</text>
<text x="99.30" y="195.50" text-anchor="end" fill="#4f7ec6" font-size="6.92">MODULE (BCM)</text>
<text x="97.00" y="204.50" text-anchor="end" fill="#363636" font-size="6.92">(BELOW RIGHT</text>
<text x="97.60" y="213.60" text-anchor="end" fill="#363636" font-size="6.92">SIDE OF DASH,</text>
<text x="97.00" y="221.80" text-anchor="end" fill="#363636" font-size="6.92">NEAR BLOWER</text>
<text x="99.30" y="230.50" text-anchor="end" fill="#363636" font-size="6.92">MOTOR)</text>
<text x="228.30" y="168.20" text-anchor="middle" fill="#363636" font-size="6.92">HOT AT</text>
<text x="228.30" y="177.40" text-anchor="middle" fill="#363636" font-size="6.92">ALL TIMES</text>
<text x="235.30" y="190.50" fill="#4f7ec6" font-size="6.92">DOOR LOCK</text>
<text x="235.30" y="198.80" fill="#4f7ec6" font-size="6.92">FUSE</text>
<text x="235.30" y="206.80" fill="#363636" font-size="6.92">15A</text>
<text x="620.80" y="177.50" text-anchor="middle" fill="#363636" font-size="6.92">HOT AT ALL TIMES</text>
<text x="605.50" y="216.80" text-anchor="end" fill="#363636" font-size="6.92">LOGIC</text>
<text x="627.30" y="238.00" fill="#363636" font-size="6.92">CLUSTER/</text>
<text x="627.30" y="245.80" fill="#363636" font-size="6.92">THEFT</text>
<text x="627.30" y="255.00" fill="#363636" font-size="6.92">FUSE</text>
<text x="627.30" y="261.80" fill="#363636" font-size="6.92">10A</text>
<polyline points="31.4,763.5 31.4,70.05 870,70.05 870,763.5" fill="none" stroke="#0a0a0a" stroke-width="1.9"/>
</svg>
</div>
</body>
</html>
